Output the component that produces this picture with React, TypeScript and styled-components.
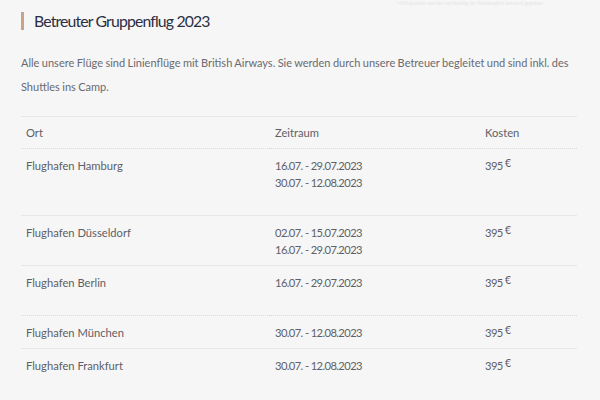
import styled, { createGlobalStyle } from 'styled-components'

type Flight = {
  place: string
  dates: string[]
  blankLine?: boolean
  dotted?: boolean
}

const flights: Flight[] = [
  { place: 'Flughafen Hamburg', dates: ['16.07. - 29.07.2023', '30.07. - 12.08.2023'], blankLine: true },
  { place: 'Flughafen Düsseldorf', dates: ['02.07. - 15.07.2023', '16.07. - 29.07.2023'] },
  { place: 'Flughafen Berlin', dates: ['16.07. - 29.07.2023'], blankLine: true, dotted: true },
  { place: 'Flughafen München', dates: ['30.07. - 12.08.2023'] },
  { place: 'Flughafen Frankfurt', dates: ['30.07. - 12.08.2023'] },
]

const App = () => {
  return (
    <Page>
      <GlobalStyle />
      <TopNote>* Abflugzeiten werden rechtzeitig vor Reisebeginn bekannt gegeben</TopNote>
      <Title>Betreuter Gruppenflug 2023</Title>
      <Intro>
        Alle unsere Flüge sind Linienflüge mit British Airways. Sie werden durch unsere Betreuer begleitet und sind inkl. des
        Shuttles ins Camp.
      </Intro>
      <Table>
        <colgroup>
          <col style={{ width: 249 }} />
          <col style={{ width: 210 }} />
          <col />
        </colgroup>
        <thead>
          <tr>
            <HeadCell>Ort</HeadCell>
            <HeadCell>Zeitraum</HeadCell>
            <HeadCell>Kosten</HeadCell>
          </tr>
        </thead>
        <tbody>
          {flights.map((f) => (
            <Row key={f.place} $dotted={f.dotted}>
              <Cell>{f.place}</Cell>
              <Cell $digits>
                {f.dates.map((d) => (
                  <Line key={d}>{d}</Line>
                ))}
                {f.blankLine && <Line>&nbsp;</Line>}
              </Cell>
              <Cell $digits>
                395 <Euro>€</Euro>
              </Cell>
            </Row>
          ))}
        </tbody>
      </Table>
    </Page>
  )
}

const GlobalStyle = createGlobalStyle`
  html, body {
    margin: 0;
    padding: 0;
    background: #f6f6f6;
  }
`

const Page = styled.div`
  width: 600px;
  height: 400px;
  box-sizing: border-box;
  padding: 0 22px 0 21px;
  background: #f6f6f6;
  font-family: Lato, 'Open Sans', sans-serif;
  overflow: hidden;
`

const TopNote = styled.div`
  height: 6px;
  padding-left: 374px;
  font-size: 5px;
  line-height: 6px;
  color: #e6e6e6;
  white-space: nowrap;
`

const Title = styled.h1`
  display: flex;
  align-items: center;
  gap: 10px;
  margin: 6px 0 0;
  height: 18px;
  font-size: 15.8px;
  font-weight: 400;
  letter-spacing: -0.85px;
  color: #2b2e44;
  line-height: 18px;

  &::before {
    content: '';
    width: 3px;
    height: 18px;
    background: #c9a287;
  }
`

const Intro = styled.p`
  margin: 21px 0 0;
  font-size: 11px;
  word-spacing: -0.4px;
  line-height: 24px;
  color: #6a6a70;
`

const Table = styled.table`
  width: 556px;
  margin-top: 17px;
  border-collapse: collapse;
  table-layout: fixed;
  font-size: 11.2px;
  color: #5f5f66;
`

const HeadCell = styled.th`
  text-align: left;
  font-weight: 400;
  padding: 7px 5px;
  line-height: 17px;
  border-top: 1px solid #e6e6e6;
  border-bottom: 1px dotted #dcdcdc;
`

const Row = styled.tr<{ $dotted?: boolean }>`
  border-bottom: 1px ${(p) => (p.$dotted ? 'dotted #dcdcdc' : 'solid #e6e6e6')};

  &:last-child {
    border-bottom: none;
  }
`

const Cell = styled.td<{ $digits?: boolean }>`
  vertical-align: top;
  padding: 8px 5px 7px;
  line-height: 17px;
  letter-spacing: ${(p) => (p.$digits ? '-0.6px' : '0')};
`

const Line = styled.div``

const Euro = styled.span`
  font-size: 10.5px;
  line-height: 0;
  vertical-align: 3px;
  letter-spacing: 0;
`

export default App
